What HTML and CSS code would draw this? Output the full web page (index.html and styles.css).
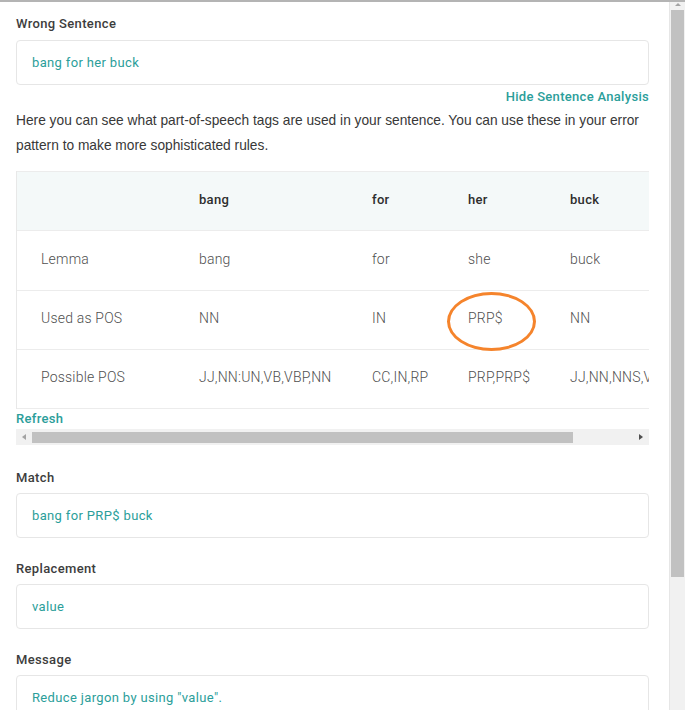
FILE: index.html
```html
<!DOCTYPE html>
<html>
<head>
<meta charset="utf-8">
<link rel="stylesheet" href="styles.css">
</head>
<body>
<div class="window">
  <main class="content">
    <section class="field first">
      <div class="label">Wrong Sentence</div>
      <div class="box">bang for her buck</div>
    </section>
    <div class="hide-link">Hide Sentence Analysis</div>
    <p class="intro">Here you can see what part-of-speech tags are used in your sentence. You can use these in your error pattern to make more sophisticated rules.</p>
    <div class="table-wrap">
      <table class="pos-table">
        <colgroup>
          <col class="c1"><col class="c2"><col class="c3"><col class="c4"><col class="c5">
        </colgroup>
        <thead>
          <tr><th></th><th>bang</th><th>for</th><th>her</th><th>buck</th></tr>
        </thead>
        <tbody>
          <tr><td>Lemma</td><td>bang</td><td>for</td><td>she</td><td>buck</td></tr>
          <tr><td>Used as POS</td><td>NN</td><td>IN</td><td><span class="circled">PRP$</span></td><td>NN</td></tr>
          <tr><td>Possible POS</td><td>JJ,NN:UN,VB,VBP,NN</td><td>CC,IN,RP</td><td>PRP,PRP$</td><td>JJ,NN,NNS,VB,VBP</td></tr>
        </tbody>
      </table>
    </div>
    <div class="refresh">Refresh</div>
    <div class="hscroll">
      <span class="arrow-left"></span>
      <span class="hthumb"></span>
      <span class="arrow-right"></span>
    </div>
    <section class="field spaced">
      <div class="label">Match</div>
      <div class="box">bang for PRP$ buck</div>
    </section>
    <section class="field">
      <div class="label">Replacement</div>
      <div class="box">value</div>
    </section>
    <section class="field">
      <div class="label">Message</div>
      <div class="box">Reduce jargon by using "value".</div>
    </section>
  </main>
  <aside class="vscroll">
    <div class="arrow-up"></div>
    <div class="vthumb"></div>
  </aside>
</div>
</body>
</html>
```

FILE: styles.css
```css
* { box-sizing: border-box; }
html, body {
  margin: 0;
  padding: 0;
  height: 710px;
  overflow: hidden;
  background: #fff;
}
body {
  font-family: Roboto, "Liberation Sans", sans-serif;
  font-size: 13px;
  color: #333;
}
.window {
  display: flex;
  height: 710px;
  border-top: 2px solid #b4b4b4;
}
.content {
  flex: 1;
  min-width: 0;
  padding: 14px 20px 0 16px;
  overflow: hidden;
}
.field { margin-bottom: 23px; }
.field.first { margin-bottom: 0; }
.field.first .label { margin-bottom: 8px; }
.field.spaced { margin-top: 25px; }
.label {
  line-height: 16px;
  font-weight: 500;
  letter-spacing: 0.35px;
  color: #3d3d3d;
  margin-bottom: 7px;
}
.box {
  height: 45px;
  border: 1px solid #e6e6e6;
  border-radius: 4px;
  padding: 0 15px;
  display: flex;
  align-items: center;
  color: #2b9e9a;
  line-height: 16px;
  letter-spacing: 0.35px;
}
.hide-link {
  margin-top: 4px;
  text-align: right;
  line-height: 16px;
  color: #2b9e9a;
  font-weight: 500;
  letter-spacing: 0.3px;
}
.intro {
  margin: 3px 0 13px;
  font-family: "Liberation Sans", Arial, sans-serif;
  font-size: 13.75px;
  line-height: 25px;
  color: #383838;
}
.table-wrap {
  overflow: hidden;
  border-left: 1px solid #e8e8e8;
}
.pos-table {
  border-collapse: collapse;
  table-layout: fixed;
  width: 700px;
}
.c1 { width: 158px; }
.c2 { width: 173px; }
.c3 { width: 96px; }
.c4 { width: 102px; }
.c5 { width: 171px; }
.pos-table th,
.pos-table td {
  height: 59px;
  padding: 0 0 4px 24px;
  text-align: left;
  white-space: nowrap;
  border-top: 1px solid #ececec;
  border-bottom: 1px solid #ececec;
  line-height: 16px;
}
.pos-table th { padding-bottom: 2px; }
.pos-table tbody tr:first-child td { height: 60px; }
.pos-table th {
  background: #f4f9f9;
  font-weight: 500;
  letter-spacing: 0.3px;
  color: #2e2e2e;
}
.pos-table td {
  font-size: 14px;
  font-weight: 300;
  letter-spacing: 0.2px;
  color: #4f4f4f;
}
.circled {
  position: relative;
  display: inline-block;
}
.circled::after {
  content: "";
  position: absolute;
  left: -21px;
  top: -18px;
  width: 83px;
  height: 53px;
  border: 3px solid #f5842c;
  border-radius: 50%;
}
.refresh {
  margin-top: 2px;
  line-height: 16px;
  color: #2b9e9a;
  font-weight: 500;
  letter-spacing: 0.3px;
}
.hscroll {
  margin-top: 2px;
  height: 16px;
  background: #f1f1f1;
  display: flex;
  align-items: center;
  padding: 0 6px;
}
.arrow-left {
  width: 0;
  height: 0;
  border-top: 3.5px solid transparent;
  border-bottom: 3.5px solid transparent;
  border-right: 4px solid #a3a3a3;
  margin-right: 6px;
}
.hthumb {
  width: 541px;
  height: 11px;
  background: #c1c1c1;
}
.arrow-right {
  margin-left: auto;
  width: 0;
  height: 0;
  border-top: 3.5px solid transparent;
  border-bottom: 3.5px solid transparent;
  border-left: 4px solid #505050;
}
.vscroll {
  width: 16px;
  flex: none;
  background: #f1f1f1;
  border-left: 1px solid #e6e6e6;
  padding: 0 1px;
}
.arrow-up {
  height: 8px;
  display: flex;
  justify-content: center;
  padding-top: 1px;
}
.arrow-up::before {
  content: "";
  width: 0;
  height: 0;
  border-left: 3.5px solid transparent;
  border-right: 3.5px solid transparent;
  border-bottom: 3px solid #a3a3a3;
}
.vthumb {
  height: 567px;
  background: #c1c1c1;
}
```
